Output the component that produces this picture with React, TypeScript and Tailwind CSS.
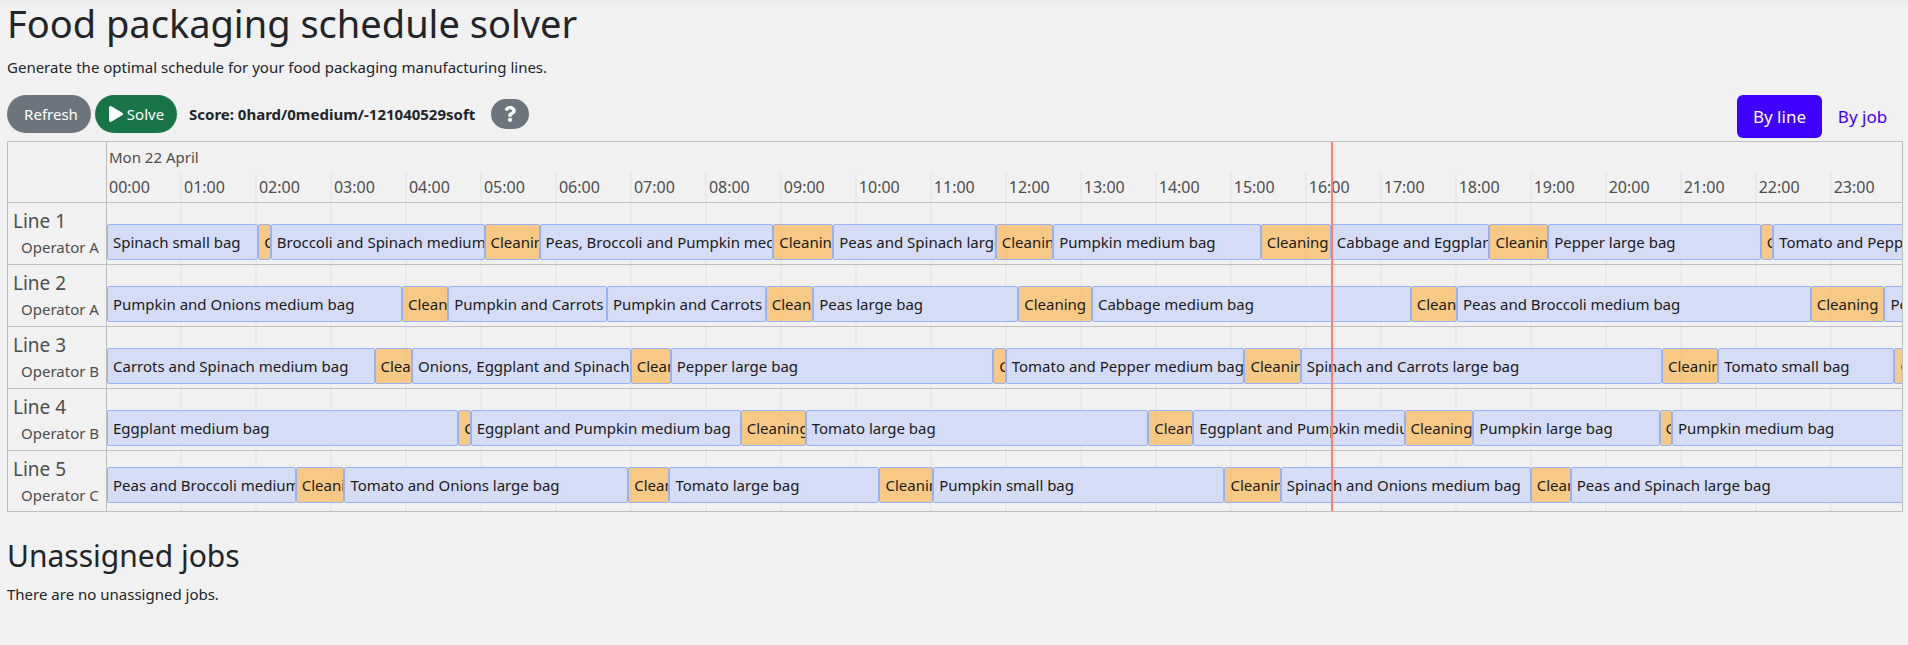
import { FaPlay, FaQuestion } from 'react-icons/fa';

const SPAN_MINUTES = 1436;
const NOW_MINUTES = 979;
const CLEANING = 'Cleaning';

type Job = [name: string, start: number];

interface Line {
  name: string;
  operator: string;
  jobs: Job[];
}

const lines: Line[] = [
  {
    name: 'Line 1',
    operator: 'Operator A',
    jobs: [
      ['Spinach small bag', 0],
      [CLEANING, 121],
      ['Broccoli and Spinach medium bag', 131],
      [CLEANING, 302],
      ['Peas, Broccoli and Pumpkin medium bag', 346],
      [CLEANING, 533],
      ['Peas and Spinach large bag', 581],
      [CLEANING, 711],
      ['Pumpkin medium bag', 757],
      [CLEANING, 923],
      ['Cabbage and Eggplant medium bag', 979],
      [CLEANING, 1106],
      ['Pepper large bag', 1153],
      [CLEANING, 1323],
      ['Tomato and Pepper large bag', 1333],
    ],
  },
  {
    name: 'Line 2',
    operator: 'Operator A',
    jobs: [
      ['Pumpkin and Onions medium bag', 0],
      [CLEANING, 236],
      ['Pumpkin and Carrots medium bag', 273],
      ['Pumpkin and Carrots medium bag', 400],
      [CLEANING, 527],
      ['Peas large bag', 565],
      [CLEANING, 729],
      ['Cabbage medium bag', 788],
      [CLEANING, 1043],
      ['Peas and Broccoli medium bag', 1080],
      [CLEANING, 1363],
      ['Peas large bag', 1422],
    ],
  },
  {
    name: 'Line 3',
    operator: 'Operator B',
    jobs: [
      ['Carrots and Spinach medium bag', 0],
      [CLEANING, 214],
      ['Onions, Eggplant and Spinach small bag', 244],
      [CLEANING, 419],
      ['Pepper large bag', 451],
      [CLEANING, 709],
      ['Tomato and Pepper medium bag', 719],
      [CLEANING, 910],
      ['Spinach and Carrots large bag', 955],
      [CLEANING, 1244],
      ['Tomato small bag', 1289],
      [CLEANING, 1430],
    ],
  },
  {
    name: 'Line 4',
    operator: 'Operator B',
    jobs: [
      ['Eggplant medium bag', 0],
      [CLEANING, 281],
      ['Eggplant and Pumpkin medium bag', 291],
      [CLEANING, 507],
      ['Tomato large bag', 559],
      [CLEANING, 833],
      ['Eggplant and Pumpkin medium bag', 869],
      [CLEANING, 1038],
      ['Pumpkin large bag', 1093],
      [CLEANING, 1242],
      ['Pumpkin medium bag', 1252],
    ],
  },
  {
    name: 'Line 5',
    operator: 'Operator C',
    jobs: [
      ['Peas and Broccoli medium bag', 0],
      [CLEANING, 151],
      ['Tomato and Onions large bag', 190],
      [CLEANING, 417],
      ['Tomato large bag', 450],
      [CLEANING, 618],
      ['Pumpkin small bag', 661],
      [CLEANING, 894],
      ['Spinach and Onions medium bag', 939],
      [CLEANING, 1139],
      ['Peas and Spinach large bag', 1171],
    ],
  },
];

const hours = Array.from({ length: 24 }, (_, h) => `${String(h).padStart(2, '0')}:00`);
const percent = (minutes: number) => `${(minutes / SPAN_MINUTES) * 100}%`;

function HourCells({ labelled = false }: { labelled?: boolean }) {
  return (
    <div className="flex h-full overflow-hidden text-base">
      {hours.map((hour) => (
        <div
          key={hour}
          className="shrink-0 border-r-2 border-[#e9e9e9] pl-[2px] leading-[30px]"
          style={{ width: percent(60) }}
        >
          {labelled && hour}
        </div>
      ))}
    </div>
  );
}

function Track({ jobs, last }: { jobs: Job[]; last: boolean }) {
  return (
    <div
      className={
        last
          ? 'relative h-[60px] pt-4'
          : 'relative h-[62px] border-b border-[#bfbfbf] pt-[21px]'
      }
    >
      <div className="absolute inset-0">
        <HourCells />
      </div>
      <div className="relative flex overflow-hidden">
        {jobs.map(([name, start], i) => {
          const end = i + 1 < jobs.length ? jobs[i + 1][1] : SPAN_MINUTES + 4;
          return (
            <div
              key={start}
              className={`h-9 shrink-0 overflow-hidden rounded-[2px] border border-[#97b0f8] pl-[5px] leading-[34px] whitespace-nowrap text-[#1a1a1a] ${
                name === CLEANING ? 'bg-[#fcaf3e99]' : 'bg-[#d5ddf6]'
              }`}
              style={{ width: percent(end - start) }}
            >
              {name}
            </div>
          );
        })}
      </div>
    </div>
  );
}

export default function App() {
  return (
    <div className="min-h-screen bg-[#f1f1f1] bg-linear-to-b from-[#ebebeb] to-[#f1f1f1] to-[8px] pr-[5px] pb-8 pl-[7px] font-['Noto_Sans',sans-serif] text-[15px] leading-6 text-[#212529]">
      <h1 className="text-[38px] leading-[47px]">Food packaging schedule solver</h1>
      <p className="pt-2">Generate the optimal schedule for your food packaging manufacturing lines.</p>

      <div className="mt-4 flex items-start justify-between pb-[3px]">
        <div className="flex items-center">
          <button type="button" className="h-[38px] w-[84px] rounded-full bg-[#6c757d] pl-1 text-white">
            Refresh
          </button>
          <button
            type="button"
            className="ml-1 flex h-[38px] w-[82px] items-center justify-center gap-[3px] rounded-full bg-[#187547] text-white"
          >
            <FaPlay className="size-4" aria-hidden="true" />
            Solve
          </button>
          <span className="ml-3 font-bold">Score: 0hard/0medium/-121040529soft</span>
          <button
            type="button"
            aria-label="Score analysis"
            className="ml-4 flex h-[30px] w-[38px] items-center justify-center rounded-full bg-[#6c757d] text-white"
          >
            <FaQuestion className="size-4" aria-hidden="true" />
          </button>
        </div>
        <nav className="flex text-[17px]">
          <button type="button" className="h-[43px] w-[85px] rounded-md bg-[#3e00ff] text-white">
            By line
          </button>
          <button type="button" className="h-[43px] w-[81px] rounded-md text-[#3e00ff]">
            By job
          </button>
        </nav>
      </div>

      <div className="flex border border-[#bfbfbf] text-[#4d4d4d]">
        <div className="w-[99px] shrink-0 border-r border-[#bfbfbf]">
          <div className="h-[61px] border-b border-[#bfbfbf]" />
          {lines.map((line, i) => (
            <div
              key={line.name}
              className={
                i === lines.length - 1
                  ? 'h-[60px] pt-[6px] pl-[5px]'
                  : 'h-[62px] border-b border-[#bfbfbf] pt-[6px] pl-[5px]'
              }
            >
              <div className="text-[19px] leading-6">{line.name}</div>
              <div className="pt-[2px] pl-2 leading-6">{line.operator}</div>
            </div>
          ))}
        </div>

        <div className="relative min-w-0 flex-1">
          <div className="border-b border-[#bfbfbf]">
            <div className="pl-[2px] leading-[30px]">Mon 22 April</div>
            <div className="h-[30px]">
              <HourCells labelled />
            </div>
          </div>
          {lines.map((line, i) => (
            <Track key={line.name} jobs={line.jobs} last={i === lines.length - 1} />
          ))}
          <div
            className="absolute inset-y-0 w-[2px] bg-[#ff7f6e]"
            style={{ left: percent(NOW_MINUTES) }}
          />
        </div>
      </div>

      <h2 className="mt-[25px] text-[30px] leading-[38px]">Unassigned jobs</h2>
      <p className="pt-[7px]">There are no unassigned jobs.</p>
    </div>
  );
}
